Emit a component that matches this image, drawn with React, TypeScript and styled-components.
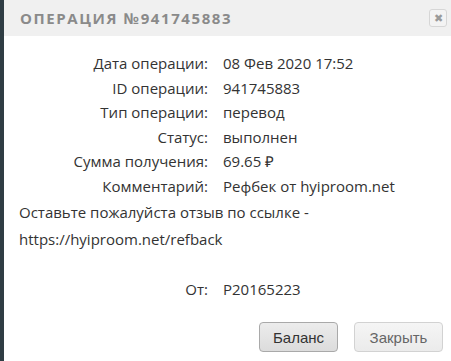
import React from 'react';
import styled, { createGlobalStyle } from 'styled-components';

const GlobalStyle = createGlobalStyle`
  html, body {
    margin: 0;
    padding: 0;
    background: #2f3d44;
  }
  body {
    font-family: 'Open Sans', 'Liberation Sans', sans-serif;
  }
`;

const Dialog = styled.div`
  margin-left: 4px;
  width: 447px;
  height: 361px;
  background: #fff;
  display: flex;
  flex-direction: column;
  overflow: hidden;
`;

const Header = styled.div`
  height: 36px;
  background: #f0f0f0;
  display: flex;
  align-items: center;
  justify-content: space-between;
  padding: 0 4px 0 16px;
  box-sizing: border-box;
`;

const Title = styled.h3`
  margin: 0;
  font-size: 15px;
  font-weight: 700;
  letter-spacing: 1.6px;
  color: #8a8a8a;
`;

const CloseBtn = styled.button`
  width: 18px;
  height: 18px;
  padding: 0;
  border: 1px solid #d6d6d6;
  border-radius: 3px;
  background: #f3f3f3;
  color: #9a9a9a;
  font-size: 11px;
  line-height: 16px;
  display: flex;
  align-items: center;
  justify-content: center;
`;

const Body = styled.div`
  padding: 15px 15px 0 15px;
  color: #333;
  font-size: 15px;
`;

const Table = styled.div<{ $gap?: number }>`
  display: grid;
  grid-template-columns: 189px 1fr;
  grid-auto-rows: 24.5px;
  column-gap: 15px;
  margin-top: ${(p) => p.$gap ?? 0}px;
`;

const Label = styled.div`
  text-align: right;
  line-height: 24.5px;
  white-space: nowrap;
`;

const Value = styled.div`
  line-height: 24.5px;
  white-space: nowrap;
`;

const Note = styled.p`
  margin: 1px 0 0;
  line-height: 27px;
`;

const Footer = styled.div`
  margin-top: auto;
  display: flex;
  justify-content: flex-end;
  gap: 16px;
  padding: 0 8px 9px 0;
`;

const Button = styled.button<{ $primary?: boolean }>`
  height: 30px;
  width: ${(p) => (p.$primary ? 79 : 89)}px;
  padding: 0;
  font-family: 'Liberation Sans', Arial, sans-serif;
  font-size: 15px;
  border-radius: 4px;
  border: 1px solid ${(p) => (p.$primary ? '#a9a9a9' : '#d2d2d2')};
  color: ${(p) => (p.$primary ? '#333' : '#666')};
  background: ${(p) =>
    p.$primary
      ? 'linear-gradient(#ececec, #dcdcdc)'
      : 'linear-gradient(#f5f5f5, #ebebeb)'};
`;

const rows: [string, string][] = [
  ['Дата операции:', '08 Фев 2020 17:52'],
  ['ID операции:', '941745883'],
  ['Тип операции:', 'перевод'],
  ['Статус:', 'выполнен'],
  ['Сумма получения:', '69.65 ₽'],
  ['Комментарий:', 'Рефбек от hyiproom.net'],
];

const App = () => (
  <>
    <GlobalStyle />
    <Dialog>
      <Header>
        <Title>ОПЕРАЦИЯ №941745883</Title>
        <CloseBtn>✖</CloseBtn>
      </Header>
      <Body>
        <Table>
          {rows.map(([l, v]) => (
            <React.Fragment key={l}>
              <Label>{l}</Label>
              <Value>{v}</Value>
            </React.Fragment>
          ))}
        </Table>
        <Note>
          Оставьте пожалуйста отзыв по ссылке -
          <br />
          https://hyiproom.net/refback
        </Note>
        <Table $gap={24}>
          <Label>От:</Label>
          <Value>P20165223</Value>
        </Table>
      </Body>
      <Footer>
        <Button $primary>Баланс</Button>
        <Button>Закрыть</Button>
      </Footer>
    </Dialog>
  </>
);

export default App;
